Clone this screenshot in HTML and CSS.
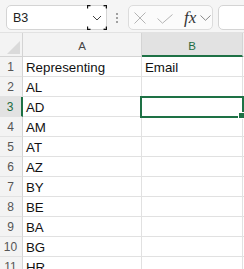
FILE: index.html
```html
<!DOCTYPE html>
<html>
<head>
<meta charset="utf-8">
<link rel="stylesheet" href="styles.css">
</head>
<body>
<div class="toolbar">
  <div class="namebox">
    <span class="ref">B3</span>
    <span class="dd">
      <svg width="20" height="25" viewBox="0 0 20 25">
        <path d="M0.5 3.5V0.5H3.5M16.5 0.5H19.5V3.5M19.5 21.5V24.5H16.5M3.5 24.5H0.5V21.5" fill="none" stroke="#111" stroke-width="1.3"/>
        <path d="M6 11L10 15L14 11" fill="none" stroke="#444" stroke-width="1"/>
      </svg>
    </span>
  </div>
  <div class="sep"><i></i><i></i><i></i></div>
  <div class="fxgroup">
    <svg class="ic-x" width="12" height="12" viewBox="0 0 12 12"><path d="M0.5 0.5L11.5 11.5M11.5 0.5L0.5 11.5" stroke="#b4b4b4" stroke-width="1"/></svg>
    <svg class="ic-ok" width="16" height="10" viewBox="0 0 16 10"><path d="M0.5 4.5L5.5 9.2L15.5 0.5" fill="none" stroke="#b4b4b4" stroke-width="1"/></svg>
    <span class="fx">fx</span>
    <svg class="ic-dd" width="11" height="6" viewBox="0 0 11 6"><path d="M0.5 0.5L5.5 5.3L10.5 0.5" fill="none" stroke="#8a8a8a" stroke-width="1"/></svg>
  </div>
  <div class="formula"></div>
</div>
<div class="grid">
  <div class="corner"><span class="tri"></span></div>
  <div class="colhead">A</div>
  <div class="colhead sel">B</div>
  <div class="colhead"></div>

  <div class="rowhead">1</div><div class="cell">Representing</div><div class="cell">Email</div><div class="cell"></div>
  <div class="rowhead">2</div><div class="cell">AL</div><div class="cell"></div><div class="cell"></div>
  <div class="rowhead sel">3</div><div class="cell">AD</div><div class="cell active"><span class="handle"></span></div><div class="cell"></div>
  <div class="rowhead">4</div><div class="cell">AM</div><div class="cell"></div><div class="cell"></div>
  <div class="rowhead">5</div><div class="cell">AT</div><div class="cell"></div><div class="cell"></div>
  <div class="rowhead">6</div><div class="cell">AZ</div><div class="cell"></div><div class="cell"></div>
  <div class="rowhead">7</div><div class="cell">BY</div><div class="cell"></div><div class="cell"></div>
  <div class="rowhead">8</div><div class="cell">BE</div><div class="cell"></div><div class="cell"></div>
  <div class="rowhead">9</div><div class="cell">BA</div><div class="cell"></div><div class="cell"></div>
  <div class="rowhead">10</div><div class="cell">BG</div><div class="cell"></div><div class="cell"></div>
  <div class="rowhead">11</div><div class="cell">HR</div><div class="cell"></div><div class="cell"></div>
</div>
</body>
</html>
```
FILE: styles.css
```css
* { box-sizing: border-box; }
html, body { margin: 0; padding: 0; }
body {
  width: 244px;
  height: 269px;
  overflow: hidden;
  background: #fff;
  font-family: "Liberation Sans", Arial, sans-serif;
}
.toolbar {
  height: 33px;
  background: #f5f5f5;
  border-bottom: 1px solid #e2e2e2;
  display: flex;
  align-items: flex-start;
  padding: 5px 0 0 6px;
}
.namebox {
  width: 101px;
  height: 25px;
  background: #fff;
  border: 1px solid #d4d4d4;
  border-radius: 5px;
  display: flex;
  align-items: center;
  justify-content: space-between;
  flex: none;
}
.ref {
  font-size: 12.5px;
  color: #222;
  padding-left: 6px;
  padding-top: 1px;
}
.dd {
  width: 20px;
  height: 25px;
  margin: -1px -1px -1px 0;
  display: block;
}
.dd svg { display: block; }
.sep {
  margin-left: 9px;
  margin-top: 8px;
  width: 2px;
  display: flex;
  flex-direction: column;
  gap: 2px;
  flex: none;
}
.sep i {
  display: block;
  width: 2px;
  height: 2px;
  background: #a0a0a0;
}
.fxgroup {
  margin-left: 10px;
  width: 85px;
  height: 25px;
  background: #fbfbfb;
  border: 1px solid #dcdcdc;
  border-radius: 5px;
  display: flex;
  align-items: center;
  padding-left: 5px;
  flex: none;
}
.fxgroup svg { display: block; flex: none; }
.ic-x { margin-top: 0px; }
.ic-ok { margin-left: 11px; margin-top: 2px; }
.fx {
  margin-left: 11px;
  font-family: "Liberation Serif", "Times New Roman", serif;
  font-style: italic;
  font-size: 17px;
  color: #333;
  line-height: 1;
  margin-top: -1px;
}
.ic-dd { margin-left: 4px; margin-top: 1px; }
.formula {
  margin-left: 5px;
  flex: 1;
  height: 25px;
  background: #fff;
  border: 1px solid #d4d4d4;
  border-radius: 5px;
  margin-right: -8px;
}
.grid {
  display: grid;
  grid-template-columns: 23px 119px 101px 1fr;
}
.corner, .colhead {
  height: 24px;
  background: #f3f3f3;
  border-bottom: 1px solid #d4d4d4;
  border-right: 1px solid #d4d4d4;
}
.corner {
  position: relative;
}
.tri {
  position: absolute;
  right: 2px;
  bottom: 2px;
  width: 13px;
  height: 13px;
  background: #dadada;
  clip-path: polygon(100% 0, 100% 100%, 0 100%);
}
.colhead {
  font-size: 11.5px;
  color: #444;
  display: flex;
  align-items: center;
  justify-content: center;
  padding-top: 3px;
}
.colhead.sel {
  background: #e2e2e2;
  color: #1d6b40;
  border-bottom: 2px solid #1e7145;
}
.rowhead {
  height: 20px;
  background: #f3f3f3;
  border-right: 1px solid #d4d4d4;
  border-bottom: 1px solid #e2e2e2;
  font-size: 12px;
  color: #555;
  text-align: center;
  line-height: 17px;
  padding-top: 2px;
  padding-right: 1px;
}
.rowhead.sel {
  background: #e2e2e2;
  color: #1d6b40;
  border-right: 2px solid #1e7145;
}
.cell {
  height: 20px;
  border-right: 1px solid #e1e1e1;
  border-bottom: 1px solid #e1e1e1;
  font-size: 13.3px;
  color: #111;
  line-height: 17px;
  padding: 2px 0 0 3px;
  white-space: nowrap;
}
.cell.active {
  position: relative;
}
.cell.active::after {
  content: "";
  position: absolute;
  left: -2px;
  top: -1px;
  right: -2px;
  bottom: -2px;
  border: 2px solid #1e7145;
}
.handle {
  position: absolute;
  right: -3px;
  bottom: -3px;
  width: 7px;
  height: 7px;
  background: #1e7145;
  border: 1px solid #fff;
  z-index: 2;
}
```
